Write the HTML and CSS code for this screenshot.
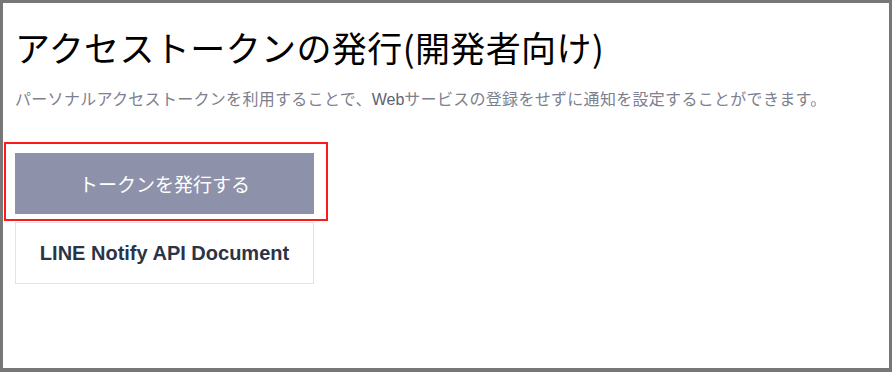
FILE: index.html
```html
<!DOCTYPE html>
<html>
  <head>
    <title>アクセストークンの発行</title>
    <link rel="stylesheet" href="styles.css">
  </head>

  <body>
    <div class="frame">
      <h1 class="page_title">アクセストークンの発行(開発者向け)</h1>
      <p class="page_lead">
        パーソナルアクセストークンを利用することで、<span class="latin">Web</span>サービスの登録をせずに通知を設定することができます。
      </p>
      <div class="actions">
        <div class="issue_wrap">
          <button class="btn btn_issue">トークンを発行する</button>
          <div class="highlight"></div>
        </div>
        <a class="btn btn_doc" href="#">LINE Notify API Document</a>
      </div>
    </div>
  </body>
</html>
```

FILE: styles.css
```css
* {
  box-sizing: border-box;
}

html,
body {
  margin: 0;
  padding: 0;
  background-color: #ffffff;
}

.frame {
  width: 892px;
  height: 372px;
  border: 3px solid #777777;
  border-bottom-width: 4px;
  padding: 19px 0 0 12px;
  font-family: "Noto Sans CJK JP", "Liberation Sans", sans-serif;
}

.page_title {
  margin: 0;
  font-size: 35px;
  font-weight: 400;
  line-height: 50px;
  color: #000000;
  letter-spacing: 0.4px;
}

.page_lead {
  margin: 14px 0 0 0;
  font-size: 16px;
  line-height: 24px;
  color: #7d808e;
  letter-spacing: 0.3px;
}

.page_lead .latin {
  font-family: "Liberation Sans", sans-serif;
  color: #5d6272;
  letter-spacing: 0;
}

.actions {
  display: flex;
  flex-direction: column;
  gap: 8px;
  margin-top: 41px;
  width: 299px;
}

.issue_wrap {
  position: relative;
}

.btn {
  display: flex;
  align-items: center;
  justify-content: center;
  width: 299px;
  text-decoration: none;
  padding: 0;
}

.btn_issue {
  height: 61px;
  border: none;
  background-color: #8d91aa;
  color: #ffffff;
  font-size: 19px;
  font-family: "Noto Sans CJK JP", "Liberation Sans", sans-serif;
}

.btn_doc {
  height: 62px;
  border: 1px solid #e3e3e3;
  background-color: #ffffff;
  color: #2b3447;
  font-size: 20px;
  font-family: "Liberation Sans", Arial, sans-serif;
  font-weight: 700;
}

.highlight {
  position: absolute;
  top: -11px;
  left: -11px;
  width: 324px;
  height: 79px;
  border: 2px solid #ff1a1a;
  pointer-events: none;
}
```
